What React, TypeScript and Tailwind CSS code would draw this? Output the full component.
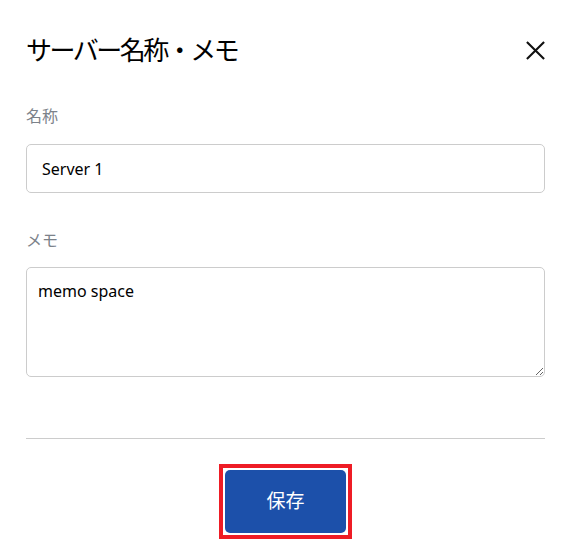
const font = { fontFamily: '"Segoe UI", "Noto Sans", "Noto Sans CJK JP", sans-serif' };

export default function App() {
  return (
    <div className="w-[569px] h-[560px] bg-white pl-[26px] pr-[24px] text-black" style={font}>
      <div className="h-[100px] flex items-center justify-between">
        <h1 className="text-[26px] leading-none font-normal tracking-[-2.5px]">サーバー名称・メモ</h1>
        <button className="w-[24px] h-[24px] mr-[-2px] flex items-center justify-center">
          <svg width="21" height="21" viewBox="0 0 22 22" fill="none" stroke="#111" strokeWidth="2.2">
            <path d="M2 2L20 20M20 2L2 20" />
          </svg>
        </button>
      </div>

      <label className="block mt-[6px] h-[20px] leading-[20px] text-[16px] text-[#7c828a]">名称</label>
      <input
        defaultValue="Server 1"
        className="mt-[18px] block w-full h-[49px] border border-[#cccccc] rounded-[5px] px-[15px] text-[16px] outline-none"
      />

      <label className="block mt-[37px] h-[20px] leading-[20px] text-[16px] text-[#7c828a]">メモ</label>
      <textarea
        defaultValue="memo space"
        className="mt-[17px] block w-full h-[110px] border border-[#cccccc] rounded-[5px] px-[11px] py-[11px] text-[16px] leading-[24px] outline-none"
      />

      <div className="mt-[61px] h-px bg-[#cccccc]" />

      <div className="mt-[25px] flex justify-center">
        <div className="border-4 border-[#ee1c25] p-[2px]">
          <button className="w-[121px] h-[63px] rounded-[5px] bg-[#1c50aa] text-white text-[19px]">保存</button>
        </div>
      </div>
    </div>
  );
}
